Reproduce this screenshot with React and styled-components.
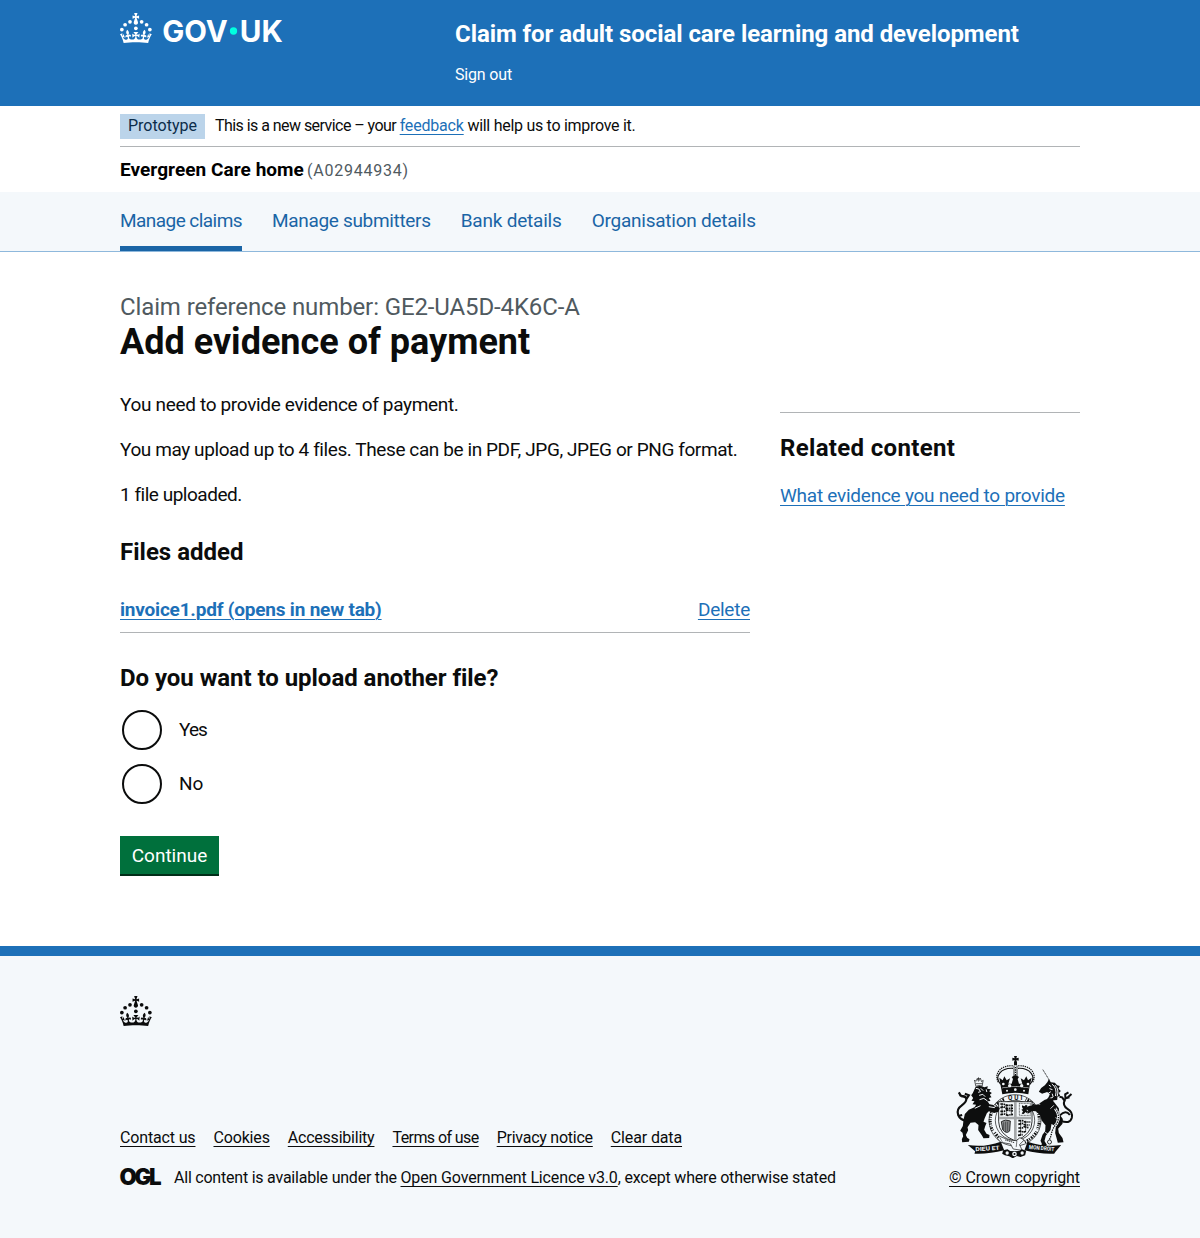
import React from "react";
import styled, { createGlobalStyle } from "styled-components";

const GlobalStyle = createGlobalStyle`
  *, *::before, *::after { box-sizing: border-box; }
  body {
    margin: 0;
    background: #fff;
    color: #0b0c0c;
    font-family: Roboto, "Liberation Sans", sans-serif;
    font-size: 19px;
    line-height: 25px;
  }
  h1, h2, p, ul { margin: 0; padding: 0; }
`;

const Container = styled.div`
  width: 960px;
  margin: 0 auto;
`;

const T = styled.span`
  letter-spacing: ${(p) => p.$ls || 0}px;
  white-space: pre;
`;

const Link = styled.a`
  color: ${(p) => p.$color || "#1d70b8"};
  font-weight: ${(p) => (p.$bold ? 700 : 400)};
  letter-spacing: ${(p) => p.$ls || 0}px;
  white-space: pre;
  text-decoration: underline;
  text-decoration-thickness: 1px;
  text-underline-offset: 0.1578em;
`;

/* Header */
const Header = styled.header`
  background: #1d70b8;
  color: #fff;
  height: 106px;
`;
const HeaderInner = styled(Container)`
  display: flex;
`;
const LogoLink = styled.a`
  width: 335px;
  padding-top: 13px;
  color: #fff;
  svg { display: block; }
`;
const ServiceBlock = styled.div`
  display: flex;
  flex-direction: column;
  gap: 13px;
  padding-top: 19px;
`;
const ServiceName = styled.a`
  font-size: 24px;
  line-height: 30px;
  font-weight: 700;
  letter-spacing: -0.07px;
`;
const SignOut = styled.a`
  font-size: 16px;
  line-height: 25px;
  letter-spacing: -0.17px;
`;

/* Phase banner */
const PhaseBanner = styled(Container)`
  display: flex;
  align-items: flex-start;
  gap: 10px;
  height: 41px;
  padding: 8px 0 7px;
  border-bottom: 1px solid #b1b4b6;
  font-size: 16px;
`;
const Tag = styled.strong`
  width: 85px;
  height: 25px;
  padding: 0 8px;
  background: #bbd4ea;
  color: #0c2d4a;
  font-weight: 400;
  line-height: 24px;
`;
const PhaseText = styled.p`
  line-height: 24px;
`;

const Organisation = styled(Container)`
  height: 45px;
  padding-top: 10px;
  color: #000;
`;
const OrgName = styled.strong`
  font-weight: 700;
  letter-spacing: 0.05px;
`;
const OrgCode = styled.span`
  margin-left: 3px;
  color: #505a5f;
  font-size: 16px;
  letter-spacing: 0.78px;
`;

/* Service navigation */
const Nav = styled.nav`
  height: 60px;
  background: #f4f8fb;
  border-bottom: 1px solid #8eb8dc;
`;
const NavList = styled.ul`
  display: flex;
  gap: 30px;
  width: 960px;
  height: 59px;
  margin: 0 auto;
  list-style: none;
`;
const NavItem = styled.li`
  height: 59px;
  padding-top: 16px;
  border-bottom: 5px solid ${(p) => (p.$current ? "#1a65a6" : "transparent")};
  color: #1a65a6;
  letter-spacing: ${(p) => p.$ls}px;
`;

/* Main */
const Main = styled(Container)`
  display: flex;
  gap: 30px;
  height: 694px;
  padding-top: 40px;
`;
const Column = styled.main`
  width: 630px;
`;
const Caption = styled.span`
  display: block;
  color: #505a5f;
  font-size: 24px;
  line-height: 30px;
  letter-spacing: -0.12px;
`;
const Title = styled.h1`
  margin-bottom: 30px;
  font-size: 36px;
  line-height: 40px;
  font-weight: 700;
`;
const Paragraph = styled.p`
  margin-bottom: 20px;
  letter-spacing: ${(p) => p.$ls}px;
  white-space: nowrap;
`;
const Heading = styled.h2`
  margin: ${(p) => p.$margin || 0};
  font-size: 24px;
  line-height: 30px;
  font-weight: 700;
  letter-spacing: ${(p) => p.$ls || 0}px;
`;
const FileRow = styled.div`
  display: flex;
  justify-content: space-between;
  padding: 10px 0;
  border-bottom: 1px solid #b1b4b6;
`;
const Radios = styled.div`
  display: flex;
  flex-direction: column;
  gap: 10px;
`;
const RadioRow = styled.label`
  display: flex;
  align-items: center;
  gap: 17px;
  height: 44px;
  padding-left: 2px;
  line-height: 24px;
`;
const RadioInput = styled.input`
  appearance: none;
  width: 40px;
  height: 40px;
  margin: 0;
  border: 2px solid #0b0c0c;
  border-radius: 50%;
  background: #fff;
`;
const Button = styled.button`
  display: block;
  width: 99px;
  height: 38px;
  margin-top: 30px;
  padding: 2px 0 0;
  border: 0;
  background: #00703c;
  box-shadow: 0 2px 0 #002d18;
  color: #fff;
  font: 400 19px/36px Roboto, "Liberation Sans", sans-serif;
`;
const Aside = styled.aside`
  width: 300px;
  height: 98px;
  margin-top: 120px;
  padding-top: 20px;
  border-top: 1px solid #b1b4b6;
`;

/* Footer */
const Footer = styled.footer`
  height: 292px;
  border-top: 10px solid #1d70b8;
  background: #f4f8fb;
  font-size: 16px;
  line-height: 20px;
`;
const FooterInner = styled(Container)`
  padding-top: 40px;
  svg { display: block; }
`;
const FooterMeta = styled.div`
  display: flex;
  justify-content: space-between;
  align-items: flex-end;
  margin-top: 30px;
`;
const FooterLinks = styled.div`
  display: flex;
  gap: 18px;
  margin-bottom: 20px;
`;
const Licence = styled.div`
  display: flex;
  gap: 13px;
`;
const Copyright = styled.div`
  display: flex;
  flex-direction: column;
  align-items: center;
  gap: 10px;
`;

const CrownShape = () => (
  <g fill="currentColor">
    <circle cx="20" cy="17.6" r="3.7" />
    <circle cx="10.2" cy="23.5" r="3.7" />
    <circle cx="3.7" cy="33.2" r="3.7" />
    <circle cx="31.7" cy="30.6" r="3.7" />
    <circle cx="43.3" cy="17.6" r="3.7" />
    <circle cx="53.2" cy="23.5" r="3.7" />
    <circle cx="59.7" cy="33.2" r="3.7" />
    <path d="M33.1,9.8c.2-.1.3-.3.5-.5l4.6,2.4v-6.8l-4.6,1.5c-.1-.2-.3-.3-.5-.5l1.9-5.9h-6.7l1.9,5.9c-.2.1-.3.3-.5.5l-4.6-1.5v6.8l4.6-2.4c.1.2.3.3.5.5l-2.6,8c-.9,2.8,1.2,5.7,4.1,5.7h0c3,0,5.1-2.9,4.1-5.7l-2.6-8ZM37,37.9s-3.4,3.8-4.1,6.1c2.2,0,4.2-.5,6.4-2.8l-.7,8.5c-2-2.8-4.4-4.1-5.7-3.8.1,3.1.5,6.7,5.8,7.2,3.7.3,6.7-1.5,7-3.8.4-2.6-2-4.3-3.7-1.6-1.4-4.5,2.4-6.1,4.9-3.2-1.9-4.5-1.8-7.7,2.4-10.9,3,4,2.6,7.3-1.2,11.1,2.4-1.3,6.2,0,4,4.6-1.2-2.8-3.7-2.2-4.2.2-.3,1.7.7,3.7,3,4.2,1.9.3,4.7-.9,7-5.9-1.3,0-2.4.7-3.9,1.7l2.4-8c.6,2.3,1.4,3.7,2.2,4.5.6-1.6.5-2.8,0-5.3l5,1.8c-2.6,3.6-5.2,8.7-7.3,17.5-7.4-1.1-15.7-1.7-24.5-1.7h0c-8.8,0-17.1.6-24.5,1.7-2.1-8.9-4.7-13.9-7.3-17.5l5-1.8c-.5,2.5-.6,3.7,0,5.3.8-.8,1.6-2.3,2.2-4.5l2.4,8c-1.5-1-2.6-1.7-3.9-1.7,2.3,5,5.2,6.2,7,5.9,2.3-.4,3.3-2.4,3-4.2-.5-2.4-3-3.1-4.2-.2-2.2-4.6,1.6-6,4-4.6-3.7-3.7-4.2-7.1-1.2-11.1,4.2,3.2,4.3,6.4,2.4,10.9,2.5-2.8,6.3-1.3,4.9,3.2-1.8-2.7-4.1-1-3.7,1.6.3,2.3,3.3,4.1,7,3.8,5.4-.5,5.7-4.2,5.8-7.2-1.3-.2-3.7,1-5.7,3.8l-.7-8.5c2.2,2.3,4.2,2.7,6.4,2.8-.7-2.3-4.1-6.1-4.1-6.1h10.6Z" />
  </g>
);

const Logo = () => (
  <svg width="163" height="30" viewBox="0 0 326 60" overflow="visible">
    <CrownShape />
    <g fill="#fff" fontFamily="Inter, sans-serif" fontWeight="700" fontSize="59">
      <text x="84.5" y="57.4" textLength="131" lengthAdjust="spacingAndGlyphs">GOV</text>
      <text x="239.5" y="57.4" textLength="86" lengthAdjust="spacingAndGlyphs">UK</text>
    </g>
    <circle cx="227" cy="36" r="7.3" fill="#00ffe0" />
  </svg>
);

const OglLogo = () => (
  <svg width="41" height="17" viewBox="0 0 41 17" overflow="visible">
    <text x="-0.6" y="16.6" fontFamily="Inter, sans-serif" fontWeight="900" fontSize="22.3" fill="#0b0c0c"
      letterSpacing="-2.2" textLength="40" lengthAdjust="spacingAndGlyphs">OGL</text>
  </svg>
);

const Crest = () => (
  <svg width="125" height="102" viewBox="37.5 33 375 306" fill="#0b0c0c" stroke="#0b0c0c" strokeWidth="0" opacity="0.99">
    <g transform="translate(1.500 0)">
      {/* royal crown */}
      <path d="M222 33h9l-2 7 7-2v9l-7-2 2 7v9h-9v-9l2-7-7 2v-9l7 2z" />
      <g fill="none" strokeWidth="3.5">
        <path d="M182 118C160 94 184 68 219 70M270 118C292 94 268 68 234 70" />
        <path d="M175 112C158 78 194 58 221 63M278 112C295 78 259 58 232 63" strokeDasharray="4 2.5" />
        <path d="M222 62V102M231 62V102" strokeWidth="2.5" />
        <path d="M226.500 66V100" strokeDasharray="4 3" />
      </g>
      <path d="M178 98l10 8 5-12 7 12 10-6-5 16h10l4-14-4-6 11-6 11 6-4 6 4 14h10l-5-16 10 6 7-12 5 12 11-8-6 24-4 26q-39-9-78 0l-5-26z" />
      <g fill="#f4f8fb">
        <circle cx="190" cy="117" r="4" /><circle cx="209" cy="122" r="5" /><circle cx="245" cy="122" r="5" /><circle cx="264" cy="117" r="4" />
        <circle cx="201" cy="137" r="3" /><circle cx="226" cy="134" r="4" /><circle cx="252" cy="137" r="3" />
        <path d="M186 128q40-9 81 0v2q-41-9-81 0z" />
      </g>
      {/* garter */}
      <ellipse cx="225" cy="226" rx="78" ry="77" fill="#f4f8fb" strokeWidth="2" />
      <ellipse cx="225" cy="226" rx="59" ry="60" fill="none" strokeWidth="2" />
      <g fill="none" strokeWidth="9">
        <path d="M158 257A68 68 0 0 1 193 163M257 163A68 68 0 0 1 292 253" strokeDasharray="2.500 3.500 5 3 2 4" />
        <path d="M164 263A70 70 0 0 0 198 290M254 290A70 70 0 0 0 290 260" strokeDasharray="3 4 5 3" />
      </g>
      <text x="204" y="166" fontFamily="Roboto, sans-serif" fontWeight="700" fontSize="19" textLength="43">QUI</text>
      {/* shield */}
      <path d="M176 170h100v60q0 38-50 58-50-20-50-58z" fill="#f4f8fb" strokeWidth="2.500" />
      <g fill="none" strokeWidth="5">
        <path d="M181 177h11l5 4h22M181 188l10-3 8 5h20M181 199h12l6-4 20 3M181 209l14-2 8 4 16-3" strokeDasharray="9 2 4 2" />
        <path d="M235 227h13l6 4h17M235 238l12-3 8 5h14M235 249h12l5-4 14 3M235 260l9-2 6 4 8-3M234 271l14-2" strokeDasharray="9 2 4 2" />
        <path d="M186 177v34M200 177v34M214 177v34M242 227v42M257 227v30" strokeWidth="2" />
      </g>
      <path d="M238 175h33v36h-33z" fill="none" strokeWidth="2" strokeDasharray="3 1.500" />
      <path d="M246 181l7 3 5-5 5 4-3 6 6-2-1 5-6 3 5 4-2 7-5-5-6 6-6-1 4-7-5-5 5-2-3-6z" />
      <path d="M184 230q12-9 27-2l-2 30q-10 10-21-4z" fill="#8b8d8f" strokeWidth="2.500" />
      <path d="M191 232v23M197 230v30M203 230v28" strokeWidth="1.500" />
      <path d="M222 171h8v114h-8zM177 215h98v8h-98z" fill="#a5a8aa" />
    </g>
    {/* lion */}
    <path d="M105 105l4 4 4-8 4 8 6-9 3 10 5-4-3 17q-10-4-19 1z" fill="#f4f8fb" strokeWidth="2" />
    <path d="M117 97v8M113 101h9M109 116h20" strokeWidth="2" />
    <path d="M108 126q14-7 26 1l11-3-2 7 11 2-5 6 8 5-6 5 5 8-8 2 5 9-9 1 6 9 12 2 2 7 9-3 8 5-4 11-13 4-16-5-6 6-7 16-3 9 9 4-4 10-3 10 7 12 9 4-1 9-17 1-5-9-11-16 1-15-10-8-14 1-9 14 2 9-7 14 4 8 7 5-2 7-20 2-1-9 4-9-2-11-7-6 8-14 2-18 4-18 12-13 17-7 5-8-11-1 6-9-9-2 5-8-6-8 5-7z" />
    <path d="M109 130l9 2 5 8-7 2M124 130l7 7M119 151l11-3 7 7M120 164l13-4 11 8M140 133l2 8M106 190l17-8M86 255l10 5M148 185l18 3" fill="none" stroke="#f4f8fb" strokeWidth="3" />
    <path d="M91 225Q65 231 56 210Q50 193 66 182Q83 169 80 160Q77 151 65 154M65 154l-7-12M77 157l-17-7M80 163l8-12-12-5M57 213l11-3" fill="none" strokeWidth="6.500" />
    {/* unicorn */}
    <path d="M310 74L331 108" strokeWidth="2.500" strokeDasharray="4 1.500" />
    <path d="M328 103l6 9 12 1 7 8 8 2-4 8 7 7-6 6 4 9-8 2-1 10-10 1-8 4-7-4-8-1 7-8 4-9-8-7-15 5-10-6 7-11 11-8 8-10z" />
    <path d="M337 117q17 12 11 36M346 120q14 13 7 34M328 120l7 5M338 146l3 10M331 160l9-3M330 131l9 3M334 140l-9 6" fill="none" stroke="#f4f8fb" strokeWidth="3" />
    <path d="M316 164l18-4 10 12 14 18 2 18 10 14-1 14-13 15 2 13 11 15 3 13-17 1-8-29 2-20-13-7-3 18-14 17-4 16 7 11-4 9-14-1 3-11-4-9 6-18 8-10 1-18-12-15-3-13-13-14-12-1-13 8 1-9-7-8 9-6 14-2 14-3z" />
    <path d="M309 160q-3-7 2-14M290 174l12 4M343 181l-10 10M348 218l12 6M317 262l8 5" fill="none" stroke="#f4f8fb" strokeWidth="2.500" />
    <path d="M363 227Q391 239 397 218Q401 202 383 191Q369 181 375 166Q379 156 390 158M377 170l-9-13-8-2M378 163l-1-15 10-6M382 160l14-13M361 211Q379 193 391 210" fill="none" strokeWidth="6" />
    <path d="M347 190q17 22 5 45-15 17-17 36l-5 20" fill="none" stroke="#f4f8fb" strokeWidth="8" />
    <path d="M347 190q17 22 5 45-15 17-17 36l-5 13" fill="none" strokeWidth="4" strokeDasharray="4 3" />
    <circle cx="330" cy="291" r="6" fill="#f4f8fb" strokeWidth="2.500" />
    {/* motto ribbon and garter buckle */}
    <path d="M85 300q50 8 99-10l10 26q-47 12-89 10l2-7zM365 300q-50 8-101-10l-9 26q47 12 89 10l4-6z" />
    <g fill="#f4f8fb" fontFamily="Roboto, sans-serif" fontWeight="700" fontSize="17">
      <text x="108" y="319" textLength="73" lengthAdjust="spacingAndGlyphs" transform="rotate(-4 108 319)">DIEU ET</text>
      <text x="268" y="312" textLength="76" lengthAdjust="spacingAndGlyphs" transform="rotate(5 268 312)">MON DROIT</text>
    </g>
    <path d="M181 274l26 11 24 2 10-9 13 7-14 14 8 17-27-4-8-15-29-5-10-11z" fill="#f4f8fb" strokeWidth="2" />
    <path d="M181 278l7 12M197 285l28 8M232 289l-2 18" strokeWidth="2.500" strokeDasharray="4 2" />
    <path d="M191 316l13-3 8 5 14 1 14-2 7-4 13 4-3 14-14 5-11-3-12 7-11-6-13-3-8-5z" />
    <g fill="#f4f8fb"><circle cx="203" cy="324" r="5" /><circle cx="225" cy="327" r="7" /><circle cx="248" cy="324" r="5" /></g>
    <circle cx="225" cy="327" r="3" />
  </svg>
);

const navItems = [
  { label: "Manage claims", ls: -0.55, current: true },
  { label: "Manage submitters", ls: -0.33 },
  { label: "Bank details", ls: -0.2 },
  { label: "Organisation details", ls: -0.24 },
];

const footerLinks = [
  { label: "Contact us", ls: -0.15 },
  { label: "Cookies", ls: -0.16 },
  { label: "Accessibility", ls: -0.22 },
  { label: "Terms of use", ls: -0.58 },
  { label: "Privacy notice", ls: -0.25 },
  { label: "Clear data", ls: -0.13 },
];

export default function App() {
  return (
    <>
      <GlobalStyle />
      <Header>
        <HeaderInner>
          <LogoLink aria-label="GOV.UK"><Logo /></LogoLink>
          <ServiceBlock>
            <ServiceName>Claim for adult social care learning and development</ServiceName>
            <SignOut>Sign out</SignOut>
          </ServiceBlock>
        </HeaderInner>
      </Header>

      <PhaseBanner>
        <Tag>Prototype</Tag>
        <PhaseText>
          <T $ls={-0.55}>{"This is a new service – your "}</T>
          <Link $ls={-0.19}>feedback</Link>
          <T $ls={-0.28}>{" will help us to improve it."}</T>
        </PhaseText>
      </PhaseBanner>

      <Organisation>
        <OrgName>Evergreen Care home</OrgName>
        <OrgCode>(A02944934)</OrgCode>
      </Organisation>

      <Nav>
        <NavList>
          {navItems.map((item) => (
            <NavItem key={item.label} $ls={item.ls} $current={item.current}>{item.label}</NavItem>
          ))}
        </NavList>
      </Nav>

      <Main>
        <Column>
          <Caption>Claim reference number: GE2-UA5D-4K6C-A</Caption>
          <Title>Add evidence of payment</Title>
          <Paragraph $ls={-0.33}>You need to provide evidence of payment.</Paragraph>
          <Paragraph $ls={-0.41}>You may upload up to 4 files. These can be in PDF, JPG, JPEG or PNG format.</Paragraph>
          <Paragraph $ls={-0.48}>1 file uploaded.</Paragraph>
          <Heading $margin="30px 0 20px">Files added</Heading>
          <FileRow>
            <Link $bold $ls={-0.2}>invoice1.pdf (opens in new tab)</Link>
            <Link $ls={-0.24}>Delete</Link>
          </FileRow>
          <Heading $margin="30px 0 15px" $ls={-0.04}>Do you want to upload another file?</Heading>
          <Radios>
            <RadioRow><RadioInput type="radio" name="another" /><T $ls={-0.9}>Yes</T></RadioRow>
            <RadioRow><RadioInput type="radio" name="another" /><T>No</T></RadioRow>
          </Radios>
          <Button>Continue</Button>
        </Column>
        <Aside>
          <Heading $margin="0 0 20px" $ls={0.33}>Related content</Heading>
          <Link $ls={-0.25}>What evidence you need to provide</Link>
        </Aside>
      </Main>

      <Footer>
        <FooterInner>
          <svg width="32" height="30" viewBox="0 0 64 60"><CrownShape /></svg>
          <FooterMeta>
            <div>
              <FooterLinks>
                {footerLinks.map((l) => (
                  <Link key={l.label} $color="#0b0c0c" $ls={l.ls}>{l.label}</Link>
                ))}
              </FooterLinks>
              <Licence>
                <OglLogo />
                <p>
                  <T $ls={-0.22}>{"All content is available under the "}</T>
                  <Link $color="#0b0c0c" $ls={-0.14}>Open Government Licence v3.0</Link>
                  <T $ls={-0.2}>, except where otherwise stated</T>
                </p>
              </Licence>
            </div>
            <Copyright>
              <Crest />
              <Link $color="#0b0c0c" $ls={-0.09}>© Crown copyright</Link>
            </Copyright>
          </FooterMeta>
        </FooterInner>
      </Footer>
    </>
  );
}
